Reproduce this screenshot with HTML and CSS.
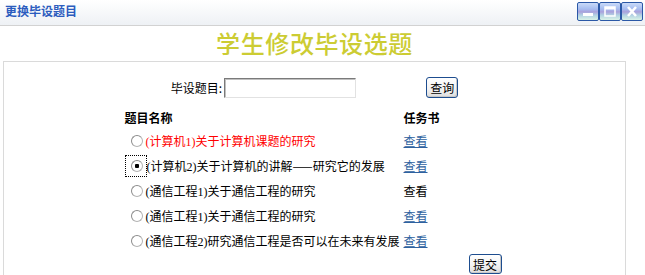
FILE: index.html
```html
<!DOCTYPE html>
<html lang="zh-CN">

<head>
    <meta charset="UTF-8">
    <title>更换毕设题目</title>
    <link rel="stylesheet" href="styles.css">
</head>

<body>
    <div class="titlebar">
        <span class="window-title">更换毕设题目</span>
        <div class="window-buttons">
            <span class="win-btn">
                <svg width="20" height="17" viewBox="0 0 20 17"><rect x="5" y="10" width="10" height="3" fill="#fff"/></svg>
            </span>
            <span class="win-btn">
                <svg width="20" height="17" viewBox="0 0 20 17"><rect x="5" y="4" width="10" height="9" fill="none" stroke="#fff" stroke-width="1.5"/><rect x="5" y="4" width="10" height="2.5" fill="#fff"/></svg>
            </span>
            <span class="win-btn">
                <svg width="20" height="17" viewBox="0 0 20 17"><path d="M6 4 L14 13 M14 4 L6 13" stroke="#fff" stroke-width="2.6"/></svg>
            </span>
        </div>
    </div>

    <div class="page">
        <h1 class="heading">学生修改毕设选题</h1>

        <div class="panel">
            <form class="search">
                <label class="search-label" for="topic">毕设题目:</label>
                <input class="search-input" id="topic" type="text">
                <button class="btn btn-query" type="button">查询</button>
            </form>

            <div class="topic-list">
                <div class="col-head">题目名称</div>
                <div class="col-head">任务书</div>

                <label class="topic red"><input class="radio" type="radio" name="topic">(计算机1)关于计算机课题的研究</label>
                <div class="task"><a href="#">查看</a></div>

                <label class="topic"><span class="focus-box"><input class="radio" type="radio" name="topic" checked></span>(计算机2)关于计算机的讲解<span class="cjk">——</span>研究它的发展</label>
                <div class="task"><a href="#">查看</a></div>

                <label class="topic"><input class="radio" type="radio" name="topic">(通信工程1)关于通信工程的研究</label>
                <div class="task">查看</div>

                <label class="topic"><input class="radio" type="radio" name="topic">(通信工程1)关于通信工程的研究</label>
                <div class="task"><a href="#">查看</a></div>

                <label class="topic"><input class="radio" type="radio" name="topic">(通信工程2)研究通信工程是否可以在未来有发展</label>
                <div class="task"><a href="#">查看</a></div>

                <div class="submit-cell">
                    <button class="btn btn-submit" type="button">提交</button>
                </div>
            </div>
        </div>
    </div>
</body>

</html>
```

FILE: styles.css
```css
* {
    box-sizing: border-box;
}

body {
    margin: 0;
    font-family: "Liberation Serif", "Noto Sans CJK SC", serif;
    font-size: 12px;
    color: #000;
    background: #fff;
    overflow: hidden;
}

/* window chrome */
.titlebar {
    height: 26px;
    padding: 2px 2px 0 5px;
    display: flex;
    justify-content: space-between;
    align-items: flex-start;
    background: linear-gradient(#ffffff, #eef1f5);
    border-bottom: 1px solid #d2d2d2;
}

.window-title {
    font-family: "Noto Sans CJK SC", sans-serif;
    font-weight: bold;
    font-size: 12px;
    line-height: 17px;
    color: #2c5cbe;
}

.window-buttons {
    display: flex;
}

.win-btn {
    width: 22px;
    height: 19px;
    border: 1px solid #2b58a6;
    border-radius: 2px;
    background: linear-gradient(#c9daf8 0%, #a6bdf0 35%, #a9a1dc 52%, #b3d3e3 72%, #d9f2e6 100%);
    display: flex;
}

/* page */
.page {
    width: 623px;
    margin-left: 3px;
}

.heading {
    margin: 0;
    height: 35px;
    line-height: 33px;
    text-align: center;
    font-family: "Noto Sans CJK SC", sans-serif;
    font-size: 24px;
    font-weight: 500;
    letter-spacing: 0.6px;
    color: #cccc33;
}

.panel {
    height: 214px;
    padding-top: 15px;
    border: 1px solid #dadada;
    border-bottom: none;
}

.search {
    display: flex;
    justify-content: center;
    align-items: center;
    height: 21px;
    margin: 0;
}

.search-label {
    font-family: "Noto Sans CJK SC", sans-serif;
}

.search-input {
    width: 132px;
    height: 20px;
    margin: 0 0 0 2px;
    border: 1px solid;
    border-color: #7a7a7a #e2e2e2 #e2e2e2 #7a7a7a;
    box-shadow: inset 1px 1px 0 #c0c0c0;
}

.btn {
    height: 21px;
    padding: 0;
    font-family: "Noto Sans CJK SC", sans-serif;
    font-size: 12px;
    color: #000;
    border: 1px solid #1d4d8f;
    border-radius: 3px;
    background: linear-gradient(#ffffff, #f2f2f2 60%, #dcdcdc);
    box-shadow: inset -1px -1px 0 #c8c8c8;
}

.btn-query {
    width: 32px;
    margin-left: 70px;
}

.btn-submit {
    width: 33px;
    height: 20px;
}

.topic-list {
    width: 380px;
    margin: 8px auto 0;
    display: grid;
    grid-template-columns: 279px 101px;
    grid-template-rows: 22px repeat(5, 25px) auto;
}

.col-head {
    display: flex;
    align-items: center;
    font-family: "Noto Sans CJK SC", sans-serif;
    font-weight: bold;
}

.topic {
    display: flex;
    align-items: center;
    padding-left: 6px;
    white-space: nowrap;
}

.topic.red {
    color: #ff0000;
}

.cjk {
    font-family: "Noto Sans CJK SC", sans-serif;
}

.radio {
    appearance: none;
    width: 12px;
    height: 12px;
    margin: 0 3px 0 0;
    border-radius: 50%;
    border: 1px solid #b4b4b4;
    border-top-color: #8c8c8c;
    border-left-color: #8c8c8c;
    background: #fff;
}

.radio:checked {
    background: radial-gradient(circle, #000 0 2px, #fff 2.5px);
}

/* dotted focus rectangle round the selected radio */
.focus-box {
    display: inline-flex;
    margin-left: -6px;
    padding: 4px 3px 4px 5px;
    border: 1px dotted #000;
}

.focus-box .radio {
    margin: 0;
}

.task {
    display: flex;
    align-items: center;
    font-family: "Noto Sans CJK SC", sans-serif;
}

.task a {
    color: #2f62a0;
    text-decoration: underline;
}

.submit-cell {
    grid-column: 2;
    padding: 1px 0 0 65px;
}
```
